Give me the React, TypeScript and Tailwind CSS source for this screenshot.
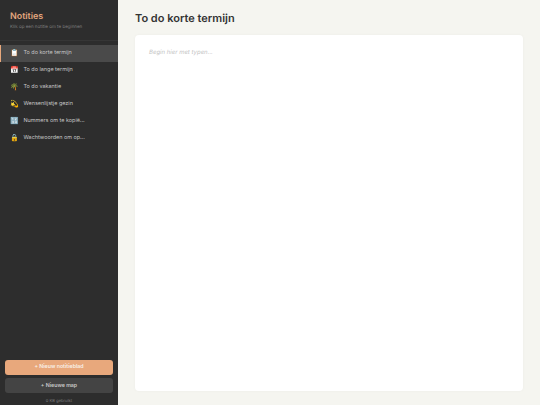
const notes = [
  { icon: "📋", name: "To do korte termijn", active: true },
  { icon: "📅", name: "To do lange termijn" },
  { icon: "🌴", name: "To do vakantie" },
  { icon: "💫", name: "Wensenlijstje gezin" },
  { icon: "🔢", name: "Nummers om te kopië..." },
  { icon: "🔒", name: "Wachtwoorden om op..." },
];

export default function App() {
  return (
    <div className="flex h-[405px] w-[540px] overflow-hidden bg-[#f5f5f0] font-['Inter',sans-serif] [text-rendering:geometricPrecision]">
      <aside className="flex w-[118px] shrink-0 flex-col bg-[#2d2d2d]">
        <div className="border-b border-[#363636] px-[10px] pt-[10px] pb-[9px]">
          <h1 className="text-[8.9px] leading-[13px] font-semibold text-[#e2a67e]">Notities</h1>
          <p className="mt-[1px] text-[4.5px] leading-[7px] text-[#7c7c7c]">Klik op een notitie om te beginnen</p>
        </div>

        <nav className="flex-1 pt-[4px]">
          {notes.map((note) => (
            <div
              key={note.name}
              className={`flex h-[17px] items-center border-l-[1.5px] pl-[9.5px] ${
                note.active ? "border-[#e8a87c] bg-[#4a4a4a]" : "border-transparent"
              }`}
            >
              <span className="w-[13px] shrink-0 pb-[2px] text-[7px] leading-none">{note.icon}</span>
              <span className="text-[5.45px] whitespace-nowrap text-[#c8c8c8]">{note.name}</span>
            </div>
          ))}
        </nav>

        <div className="flex flex-col gap-[3px] px-[5px]">
          <button className="h-[15.5px] rounded-[3px] bg-[#e8a87c] text-[5.25px] font-semibold text-[#f8f0e8]">+ Nieuw notitieblad</button>
          <button className="h-[15px] rounded-[3px] bg-[#444444] text-[5.25px] font-semibold text-[#c8c8c8]">+ Nieuwe map</button>
        </div>
        <p className="pt-[5px] pb-[1px] text-center text-[4.1px] leading-[6px] text-[#7c7c7c]">0 KB gebruikt</p>
      </aside>

      <main className="flex min-w-0 flex-1 flex-col px-[17px] pt-[10px] pb-[14px]">
        <h2 className="text-[11px] leading-[17px] font-semibold text-[#333333]">To do korte termijn</h2>
        <div className="mt-[8px] flex-1 rounded-[4px] bg-white px-[14px] pt-[14px] shadow-[0_0_3px_rgba(0,0,0,0.04)]">
          <p className="text-[6px] leading-[8px] text-[#c4c4c4] italic">Begin hier met typen...</p>
        </div>
      </main>
    </div>
  );
}
